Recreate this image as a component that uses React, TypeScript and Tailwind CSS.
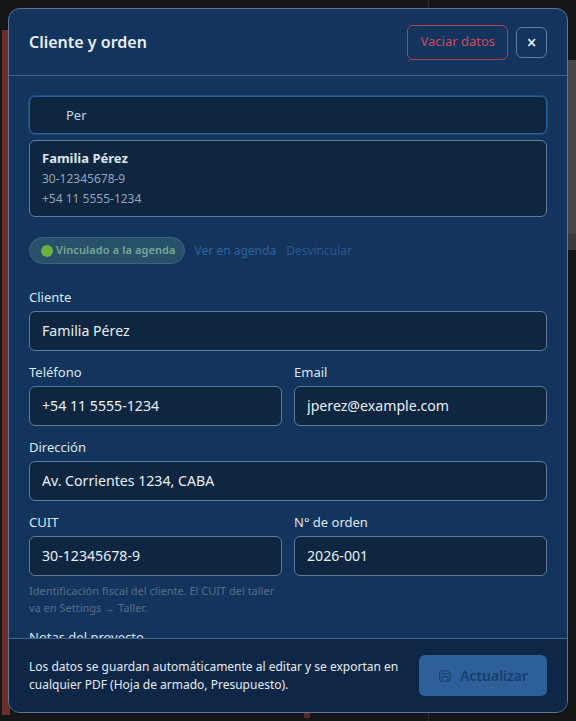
import React from 'react';
import { Save } from 'lucide-react';

function Field({ label, value, className = '' }: { label: string, value: string, className?: string }) {
  return (
    <div className={`flex flex-col min-w-0 ${className}`}>
      <label className="text-[13px] leading-[18px] font-normal text-[#dfe7f0] mb-[5px]">{label}</label>
      <input
        readOnly
        value={value}
        className="w-full h-10 px-3 pb-[2px] rounded-md border border-[#5f7a9c] bg-[#0e2640] text-[14.15px] text-[#e8eef5] outline-none"
      />
    </div>
  );
}

export default function App() {
  return (
    <div className="relative w-[576px] h-[721px] overflow-hidden bg-[#151617] font-['Noto_Sans',sans-serif]">
      {/* Backdrop: dimmed page behind the modal */}
      <div className="absolute left-[2px] top-[30px] w-[8px] h-[685px] bg-[#6b2f30]"></div>
      <div className="absolute left-[566px] top-[60px] w-[10px] h-[174px] bg-[#464646]"></div>
      <div className="absolute left-[566px] top-[234px] w-[10px] h-[16px] bg-[#3a3a3a]"></div>
      <div className="absolute left-[428px] top-0 w-px h-[721px] bg-[#2a2a2c]"></div>
      <div className="absolute left-[304px] top-[713px] w-[6px] h-[5px] bg-[#5a2a2c]"></div>

      <div className="relative ml-2 mt-2 w-[560px] h-[705px] flex flex-col overflow-hidden rounded-xl border border-[#5d7798] bg-[#12345d]">
        {/* Header */}
        <div className="flex items-center justify-between h-[67px] shrink-0 pl-5 pr-5 border-b border-[#46658a]">
          <h2 className="text-[16px] font-semibold text-[#e8eef5]">Cliente y orden</h2>
          <div className="flex items-center gap-2">
            <button className="h-[35px] px-3 rounded-md border border-[#b53f52] text-[13px] text-[#cb4a5e]">Vaciar datos</button>
            <button className="w-[31px] h-[31px] flex items-center justify-center rounded-md border border-[#5f7a9c] text-[17px] leading-none font-semibold text-[#e8eef5]">×</button>
          </div>
        </div>

        {/* Body */}
        <div className="flex-1 min-h-0 overflow-hidden px-5 pt-5">
          <input
            readOnly
            value="Per"
            className="w-full h-[38px] pl-[36px] pr-3 rounded-md border border-[#2c6299] bg-[#0e2640] text-[13px] text-[#cdd8e5] outline-none shadow-[0_0_0_1px_#1c4a7f]"
          />
          <div className="mt-[6px] h-[77px] rounded-md border border-[#5f7a9c] bg-[#0e2640] px-3 py-[7px] flex flex-col">
            <span className="text-[13px] leading-5 font-bold text-[#dbe4ee]">Familia Pérez</span>
            <span className="mt-px text-[12px] leading-5 text-[#94a5b9]">30-12345678-9</span>
            <span className="text-[12px] leading-5 text-[#94a5b9]">+54 11 5555-1234</span>
          </div>

          <div className="mt-5 flex items-center">
            <span className="h-[27px] flex items-center gap-[3px] pl-[11px] pr-[8px] rounded-full border border-[#3f6179] bg-[#27506b] text-[11px] font-semibold tracking-[0.1px] text-[#7aa794]">
              <span className="w-[12px] h-[12px] rounded-full bg-[#6fb13f]"></span>
              Vinculado a la agenda
            </span>
            <span className="ml-[10px] text-[12px] text-[#2f639e]">Ver en agenda</span>
            <span className="ml-[10px] text-[12px] text-[#2a5890]">Desvincular</span>
          </div>

          <div className="mt-6 flex flex-col gap-3">
            <Field label="Cliente" value="Familia Pérez" />
            <div className="grid grid-cols-2 gap-3">
              <Field label="Teléfono" value="+54 11 5555-1234" />
              <Field label="Email" value="jperez@example.com" />
            </div>
            <Field label="Dirección" value="Av. Corrientes 1234, CABA" />
            <div className="grid grid-cols-2 gap-3">
              <div className="flex flex-col">
                <Field label="CUIT" value="30-12345678-9" />
                <p className="mt-[6px] text-[11px] leading-[17px] text-[#586e88]">Identificación fiscal del cliente. El CUIT del taller va en Settings → Taller.</p>
              </div>
              <Field label="N° de orden" value="2026-001" />
            </div>
            <Field label="Notas del proyecto" value="" />
          </div>
        </div>

        {/* Footer */}
        <div className="h-[74px] shrink-0 flex items-center justify-between gap-4 pl-5 pr-5 border-t border-[#46658a] bg-[#0f2746]">
          <p className="w-[375px] text-[12px] leading-[18px] text-[#e4ebf3]">Los datos se guardan automáticamente al editar y se exportan en cualquier PDF (Hoja de armado, Presupuesto).</p>
          <button className="w-[128px] h-[41px] shrink-0 flex items-center justify-center gap-2 rounded-md bg-[#2d6098] text-[14px] font-semibold text-[#163f70]">
            <Save className="w-[14px] h-[14px]" />
            Actualizar
          </button>
        </div>
      </div>
    </div>
  );
}
